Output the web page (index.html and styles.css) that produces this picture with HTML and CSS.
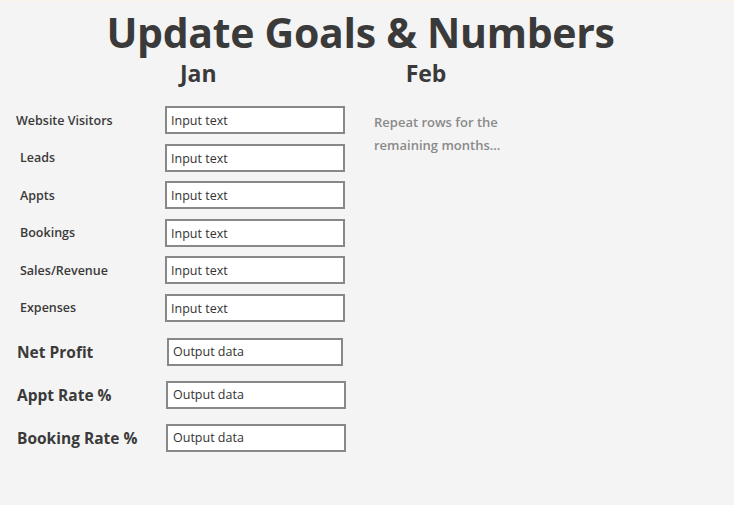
FILE: index.html
```html
<!DOCTYPE html>
<html>
<head>
<meta charset="utf-8">
<link rel="stylesheet" href="styles.css">
</head>
<body>
<div class="page">
  <h1 class="title">Update Goals &amp; Numbers</h1>
  <div class="months">
    <div class="month jan">Jan</div>
    <div class="month feb">Feb</div>
  </div>
  <div class="content">
    <div class="form">
      <div class="row"><span class="label l0">Website Visitors</span><div class="box">Input text</div></div>
      <div class="row"><span class="label">Leads</span><div class="box">Input text</div></div>
      <div class="row"><span class="label">Appts</span><div class="box">Input text</div></div>
      <div class="row"><span class="label">Bookings</span><div class="box">Input text</div></div>
      <div class="row"><span class="label">Sales/Revenue</span><div class="box">Input text</div></div>
      <div class="row"><span class="label">Expenses</span><div class="box">Input text</div></div>
      <div class="outputs">
        <div class="orow np"><span class="big">Net Profit</span><div class="box out">Output data</div></div>
        <div class="orow"><span class="big">Appt Rate %</span><div class="box out">Output data</div></div>
        <div class="orow"><span class="big">Booking Rate %</span><div class="box out">Output data</div></div>
      </div>
    </div>
    <p class="note">Repeat rows for the<br>remaining months...</p>
  </div>
</div>
</body>
</html>
```
FILE: styles.css
```css
html, body { margin: 0; padding: 0; }
body {
  background: #f4f4f4;
  font-family: "Open Sans", "Noto Sans", sans-serif;
  color: #3a3a3a;
  width: 734px;
  height: 505px;
  border-top: 2px solid #f7f3ea;
  box-sizing: border-box;
}
.title {
  margin: 0;
  padding-right: 13px;
  text-align: center;
  font-size: 41px;
  font-weight: 700;
  line-height: 60px;
  height: 53px;
  letter-spacing: -0.3px;
  color: #3a3a3a;
}
.months { display: flex; height: 36px; align-items: center; }
.month { font-size: 23px; font-weight: 700; }
.jan { margin-left: 180px; }
.feb { margin-left: 189px; }
.content { display: flex; margin-top: 15px; }
.form { display: flex; flex-direction: column; padding-left: 16px; }
.row { display: flex; align-items: center; height: 28px; margin-bottom: 9.6px; }
.label { width: 145px; padding-left: 4px; font-size: 12.5px; font-weight: 600; color: #3a3a3a; }
.label.l0 { padding-left: 0; width: 149px; }
.box {
  box-sizing: border-box;
  width: 180px;
  height: 28px;
  border: 2px solid #888;
  background: #fff;
  font-size: 12.5px;
  padding: 4px 0 0 4px;
  color: #333;
}
.outputs { margin-top: 6px; }
.orow { display: flex; align-items: center; height: 28px; margin-bottom: 15px; }
.big { width: 149px; padding-left: 1px; font-size: 15.5px; font-weight: 700; }
.np .box { width: 176px; margin-left: 1px; }
.out { padding-left: 5px; padding-top: 3px; }
.np .out { padding-left: 4px; }
.note {
  margin: 5px 0 0 28px;
  font-size: 13px;
  font-weight: 600;
  line-height: 23px;
  color: #8a8a8a;
}
```
